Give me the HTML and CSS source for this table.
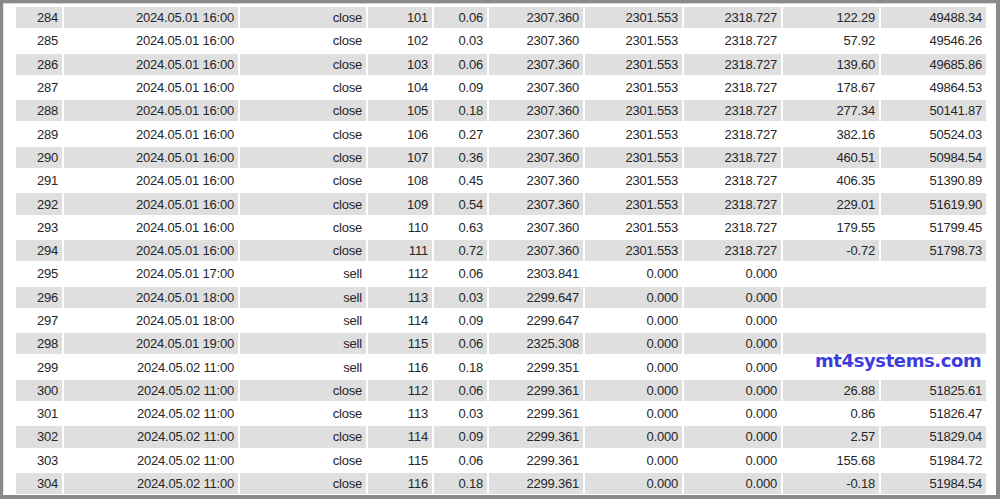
FILE: index.html
```html
<!DOCTYPE html>
<html>
<head>
<meta charset="utf-8">
<link rel="stylesheet" href="styles.css">
</head>
<body>
<div class="frame">
  <table class="report">
    <colgroup>
      <col class="c-num"><col class="c-time"><col class="c-type"><col class="c-order"><col class="c-size">
      <col class="c-price"><col class="c-sl"><col class="c-tp"><col class="c-profit"><col class="c-bal">
    </colgroup>
    <tbody>
      <tr class="alt"><td>284</td><td>2024.05.01 16:00</td><td>close</td><td>101</td><td>0.06</td><td>2307.360</td><td>2301.553</td><td>2318.727</td><td>122.29</td><td>49488.34</td></tr>
      <tr><td>285</td><td>2024.05.01 16:00</td><td>close</td><td>102</td><td>0.03</td><td>2307.360</td><td>2301.553</td><td>2318.727</td><td>57.92</td><td>49546.26</td></tr>
      <tr class="alt"><td>286</td><td>2024.05.01 16:00</td><td>close</td><td>103</td><td>0.06</td><td>2307.360</td><td>2301.553</td><td>2318.727</td><td>139.60</td><td>49685.86</td></tr>
      <tr><td>287</td><td>2024.05.01 16:00</td><td>close</td><td>104</td><td>0.09</td><td>2307.360</td><td>2301.553</td><td>2318.727</td><td>178.67</td><td>49864.53</td></tr>
      <tr class="alt"><td>288</td><td>2024.05.01 16:00</td><td>close</td><td>105</td><td>0.18</td><td>2307.360</td><td>2301.553</td><td>2318.727</td><td>277.34</td><td>50141.87</td></tr>
      <tr><td>289</td><td>2024.05.01 16:00</td><td>close</td><td>106</td><td>0.27</td><td>2307.360</td><td>2301.553</td><td>2318.727</td><td>382.16</td><td>50524.03</td></tr>
      <tr class="alt"><td>290</td><td>2024.05.01 16:00</td><td>close</td><td>107</td><td>0.36</td><td>2307.360</td><td>2301.553</td><td>2318.727</td><td>460.51</td><td>50984.54</td></tr>
      <tr><td>291</td><td>2024.05.01 16:00</td><td>close</td><td>108</td><td>0.45</td><td>2307.360</td><td>2301.553</td><td>2318.727</td><td>406.35</td><td>51390.89</td></tr>
      <tr class="alt"><td>292</td><td>2024.05.01 16:00</td><td>close</td><td>109</td><td>0.54</td><td>2307.360</td><td>2301.553</td><td>2318.727</td><td>229.01</td><td>51619.90</td></tr>
      <tr><td>293</td><td>2024.05.01 16:00</td><td>close</td><td>110</td><td>0.63</td><td>2307.360</td><td>2301.553</td><td>2318.727</td><td>179.55</td><td>51799.45</td></tr>
      <tr class="alt"><td>294</td><td>2024.05.01 16:00</td><td>close</td><td>111</td><td>0.72</td><td>2307.360</td><td>2301.553</td><td>2318.727</td><td>-0.72</td><td>51798.73</td></tr>
      <tr><td>295</td><td>2024.05.01 17:00</td><td>sell</td><td>112</td><td>0.06</td><td>2303.841</td><td>0.000</td><td>0.000</td><td colspan="2"></td></tr>
      <tr class="alt"><td>296</td><td>2024.05.01 18:00</td><td>sell</td><td>113</td><td>0.03</td><td>2299.647</td><td>0.000</td><td>0.000</td><td colspan="2"></td></tr>
      <tr><td>297</td><td>2024.05.01 18:00</td><td>sell</td><td>114</td><td>0.09</td><td>2299.647</td><td>0.000</td><td>0.000</td><td colspan="2"></td></tr>
      <tr class="alt"><td>298</td><td>2024.05.01 19:00</td><td>sell</td><td>115</td><td>0.06</td><td>2325.308</td><td>0.000</td><td>0.000</td><td colspan="2"></td></tr>
      <tr><td>299</td><td>2024.05.02 11:00</td><td>sell</td><td>116</td><td>0.18</td><td>2299.351</td><td>0.000</td><td>0.000</td><td colspan="2"></td></tr>
      <tr class="alt"><td>300</td><td>2024.05.02 11:00</td><td>close</td><td>112</td><td>0.06</td><td>2299.361</td><td>0.000</td><td>0.000</td><td>26.88</td><td>51825.61</td></tr>
      <tr><td>301</td><td>2024.05.02 11:00</td><td>close</td><td>113</td><td>0.03</td><td>2299.361</td><td>0.000</td><td>0.000</td><td>0.86</td><td>51826.47</td></tr>
      <tr class="alt"><td>302</td><td>2024.05.02 11:00</td><td>close</td><td>114</td><td>0.09</td><td>2299.361</td><td>0.000</td><td>0.000</td><td>2.57</td><td>51829.04</td></tr>
      <tr><td>303</td><td>2024.05.02 11:00</td><td>close</td><td>115</td><td>0.06</td><td>2299.361</td><td>0.000</td><td>0.000</td><td>155.68</td><td>51984.72</td></tr>
      <tr class="alt"><td>304</td><td>2024.05.02 11:00</td><td>close</td><td>116</td><td>0.18</td><td>2299.361</td><td>0.000</td><td>0.000</td><td>-0.18</td><td>51984.54</td></tr>
    </tbody>
  </table>
  <div class="watermark">mt4systems.com</div>
</div>
</body>
</html>
```

FILE: styles.css
```css
html, body {
  margin: 0;
  padding: 0;
  background: #ffffff;
}

.frame {
  position: relative;
  box-sizing: border-box;
  width: 1000px;
  height: 499px;
  border-style: solid;
  border-color: #8a8a8a;
  border-width: 3px 4px 4px 3px;
  padding: 2px 0 0 11px;
  background: #ffffff;
  box-shadow: inset 0 1px 0 #d6d6d6, inset 1px 0 0 #e6e6e6;
  overflow: hidden;
}

.report {
  border-collapse: separate;
  border-spacing: 2px;
  table-layout: fixed;
  width: 974px;
  font-family: "Liberation Sans", Arial, sans-serif;
  font-size: 13px;
  letter-spacing: -0.2px;
  color: #262626;
}

.c-num { width: 46px; }
.c-time { width: 174px; }
.c-type { width: 126px; }
.c-order { width: 64px; }
.c-size { width: 53px; }
.c-price { width: 94px; }
.c-sl { width: 97px; }
.c-tp { width: 97px; }
.c-profit { width: 96px; }
.c-bal { width: 105px; }

.report td {
  height: 21.3px;
  padding: 0 4px 0 0;
  text-align: right;
  vertical-align: middle;
  white-space: nowrap;
  line-height: 15px;
  box-sizing: border-box;
}

.report tr.alt td {
  background: #dfdfdf;
}

.watermark {
  position: absolute;
  left: 812px;
  top: 347px;
  font-family: "DejaVu Sans", Verdana, sans-serif;
  font-weight: bold;
  font-size: 18px;
  letter-spacing: -0.4px;
  line-height: 21px;
  color: #3d3ddd;
}
```
